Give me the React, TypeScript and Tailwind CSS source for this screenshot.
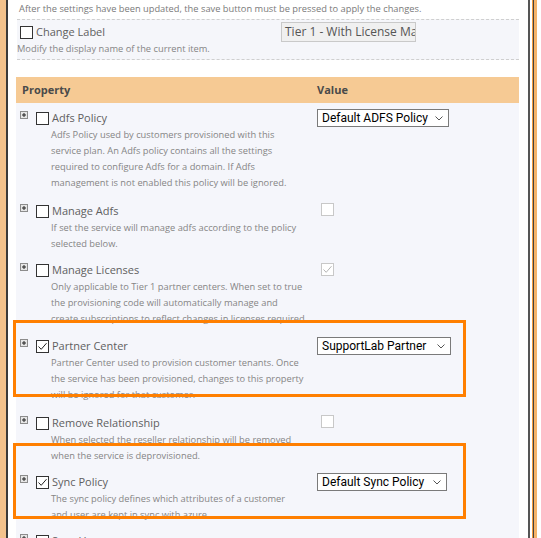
import React from 'react';

type PropRow = {
  title: string;
  lines: string[];
  checked?: boolean;
  height: string;
  value?: React.ReactNode;
};

const ExpandIcon = () => (
  <svg width="8" height="8" viewBox="0 0 8 8" className="shrink-0 self-start mt-[1px]">
    <rect x="0.5" y="0.5" width="7" height="7" fill="#e6e6e6" stroke="#8c8c8c" />
    <path d="M2 4h4M4 2v4" stroke="#222" strokeWidth="1" />
  </svg>
);

const CheckBox = ({ checked = false, disabled = false }: { checked?: boolean; disabled?: boolean }) => (
  <span
    className={`flex w-[13px] h-[13px] shrink-0 items-center justify-center bg-white border ${
      disabled ? 'border-[#c8c8c8]' : 'border-[#333]'
    }`}
  >
    {checked && (
      <svg width="11" height="11" viewBox="0 0 11 11">
        <path d="M1.5 5.5 L4.2 8.3 L9.5 2.2" fill="none" stroke={disabled ? '#b5b5b5' : '#222'} strokeWidth="1" />
      </svg>
    )}
  </span>
);

const Select = ({ label, width }: { label: string; width: string }) => (
  <div
    className={`flex ${width} h-[18px] items-center justify-between border border-[#7a7a7a] bg-white pl-[4px] pr-[5px] font-['Roboto',sans-serif] text-[12px] text-black`}
  >
    <span className="whitespace-nowrap leading-none">{label}</span>
    <svg width="8" height="5" viewBox="0 0 8 5">
      <path d="M0.5 0.5 L4 4 L7.5 0.5" fill="none" stroke="#555" strokeWidth="1" />
    </svg>
  </div>
);

const rows: PropRow[] = [
  {
    title: 'Adfs Policy',
    height: 'h-[93px]',
    lines: [
      'Adfs Policy used by customers provisioned with this',
      'service plan. An Adfs policy contains all the settings',
      'required to configure Adfs for a domain. If Adfs',
      'management is not enabled this policy will be ignored.',
    ],
    value: <Select label="Default ADFS Policy" width="w-[132px]" />,
  },
  {
    title: 'Manage Adfs',
    height: 'h-[59px]',
    lines: ['If set the service will manage adfs according to the policy', 'selected below.'],
    value: <div className="pl-[4px] pt-[1px]"><CheckBox disabled /></div>,
  },
  {
    title: 'Manage Licenses',
    height: 'h-[76px]',
    lines: [
      'Only applicable to Tier 1 partner centers. When set to true',
      'the provisioning code will automatically manage and',
      'create subscriptions to reflect changes in licenses required.',
    ],
    value: <div className="pl-[4px] pt-[2px]"><CheckBox disabled checked /></div>,
  },
  {
    title: 'Partner Center',
    height: 'h-[77px]',
    checked: true,
    lines: [
      'Partner Center used to provision customer tenants. Once',
      'the service has been provisioned, changes to this property',
      'will be ignored for that customer.',
    ],
    value: <Select label="SupportLab Partner" width="w-[134px]" />,
  },
  {
    title: 'Remove Relationship',
    height: 'h-[59px]',
    lines: ['When selected the reseller relationship will be removed', 'when the service is deprovisioned.'],
    value: <div className="pl-[4px] pt-[1px]"><CheckBox disabled /></div>,
  },
  {
    title: 'Sync Policy',
    height: 'h-[59px]',
    checked: true,
    lines: ['The sync policy defines which attributes of a customer', 'and user are kept in sync with azure.'],
    value: <Select label="Default Sync Policy" width="w-[130px]" />,
  },
  {
    title: 'Sync Users',
    height: 'h-[40px]',
    lines: ['When set, users will be kept in sync with the tenant.'],
  },
];

export default function App() {
  return (
    <div className="relative flex w-[541px] h-[538px] overflow-hidden bg-white font-['Open_Sans',sans-serif]">
      {/* left frame */}
      <div className="w-[6px] shrink-0 bg-[#f3c28c]" />
      <div className="w-[2px] shrink-0 bg-[#3a3a3a]" />

      <main className="w-[520px] shrink-0 pl-[8px] pr-[9px]">
        <div className="-mt-[12px] pl-[3px] text-[9.3px] leading-[14px] text-[#7a7a7a] whitespace-nowrap">
          <div>Changes made here will only apply to services that are provisioned using this plan.</div>
          <div>After the settings have been updated, the save button must be pressed to apply the changes.</div>
        </div>

        {/* change label */}
        <div className="mt-[3px] ml-[1px] flex h-[41px] border-y border-dashed border-[#cfcfcf] bg-[#f5f6fa]">
          <div className="w-[264px] shrink-0 pt-[4px]">
            <div className="flex h-[17px] items-center pl-[3px]">
              <CheckBox />
              <span className="ml-[3px] text-[11px] text-[#5f5f5f]">Change Label</span>
            </div>
            <div className="text-[9.3px] leading-[16px] text-[#858585]">
              Modify the display name of the current item.
            </div>
          </div>
          <div className="mt-[2px] h-[20px] w-[135px] overflow-hidden whitespace-nowrap border border-[#c9c9c9] bg-[#f0f0f0] pl-[3px] text-[12px] leading-[18px] text-[#555]">
            Tier 1 - With License Management
          </div>
        </div>

        {/* property table */}
        <div className="mt-[17px]">
          <div className="flex h-[26px] items-center bg-[#f6ca94] text-[11px] font-bold text-[#4a4a4a]">
            <div className="w-[301px] shrink-0 pl-[6px]">Property</div>
            <div>Value</div>
          </div>
          <div className="bg-[#f5f6fb] pt-[3px]">
            {rows.map((r) => (
              <div key={r.title} className={`flex ${r.height}`}>
                <div className="w-[301px] shrink-0 pl-[4px] pt-[4px]">
                  <div className="flex h-[17px] items-center">
                    <ExpandIcon />
                    <span className="ml-[8px]">
                      <CheckBox checked={r.checked} />
                    </span>
                    <span className="ml-[3px] text-[11px] text-[#5f5f5f] whitespace-nowrap">{r.title}</span>
                  </div>
                  <div className="pl-[31px] text-[9.3px] leading-[16px] text-[#858585] whitespace-nowrap">
                    {r.lines.map((l) => (
                      <div key={l}>{l}</div>
                    ))}
                  </div>
                </div>
                <div className="pt-[3px]">{r.value}</div>
              </div>
            ))}
          </div>
        </div>
      </main>

      {/* right frame */}
      <div className="w-[2px] shrink-0 bg-[#555]" />
      <div className="w-[2px] shrink-0 bg-white" />
      <div className="w-[1px] shrink-0 bg-[#f39a3c]" />
      <div className="w-[1px] shrink-0 bg-[#444]" />
      <div className="w-[3px] shrink-0 bg-[#f6b46a]" />

      {/* highlight boxes */}
      <div className="absolute left-[13px] top-[320px] h-[77px] w-[453px] border-[3px] border-[#ff7f00]" />
      <div className="absolute left-[13px] top-[443px] h-[76px] w-[453px] border-[3px] border-[#ff7f00]" />
    </div>
  );
}
